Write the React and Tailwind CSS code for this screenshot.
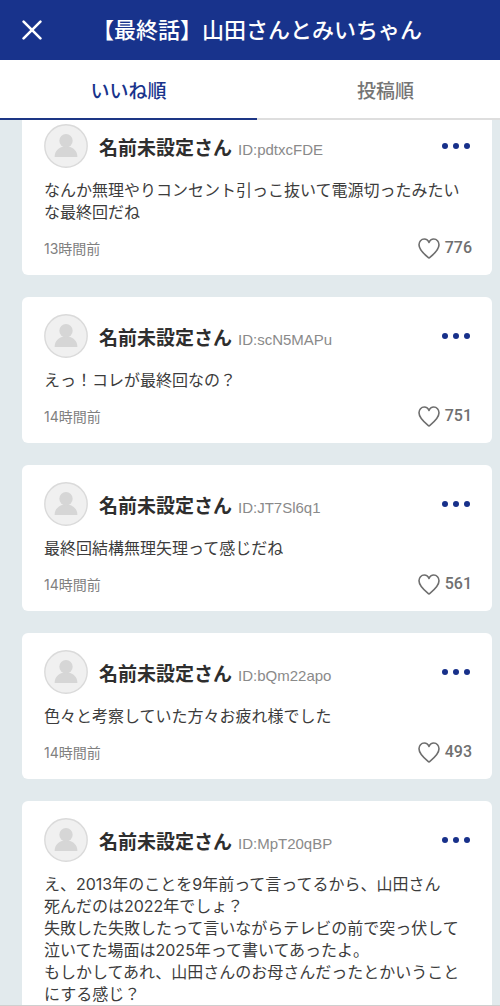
import React, { useState } from 'react';

const comments = [
  { id: 'pdtxcFDE', time: '13時間前', likes: 776, text: 'なんか無理やりコンセント引っこ抜いて電源切ったみたいな最終回だね' },
  { id: 'scN5MAPu', time: '14時間前', likes: 751, text: 'えっ！コレが最終回なの？' },
  { id: 'JT7Sl6q1', time: '14時間前', likes: 561, text: '最終回結構無理矢理って感じだね' },
  { id: 'bQm22apo', time: '14時間前', likes: 493, text: '色々と考察していた方々お疲れ様でした' },
  {
    id: 'MpT20qBP',
    text: 'え、2013年のことを9年前って言ってるから、山田さん\n死んだのは2022年でしょ？\n失敗した失敗したって言いながらテレビの前で突っ伏して泣いてた場面は2025年って書いてあったよ。\nもしかしてあれ、山田さんのお母さんだったとかいうことにする感じ？',
  },
];

const tabs = [
  { key: 'likes', label: 'いいね順' },
  { key: 'recent', label: '投稿順' },
];

function Avatar() {
  return (
    <svg viewBox="0 0 44 44" className="size-11 shrink-0" aria-hidden="true">
      <circle cx="22" cy="22" r="21.2" fill="#f0f0f0" stroke="#dadada" strokeWidth="1.4" />
      <path d="M10.6 33c0-5.8 3.6-8.8 8.2-10.2h6.400c4.6 1.400 8.2 4.400 8.2 10.200z" fill="#d6d6d6" />
      <circle cx="22" cy="16.8" r="6.7" fill="#d6d6d6" />
    </svg>
  );
}

function Heart() {
  return (
    <svg viewBox="0 0 22 21" className="h-[21px] w-[22px]" fill="none" stroke="#6e6e6e" strokeWidth="1.6" strokeLinejoin="round" aria-hidden="true">
      <path d="M11 20C7.5 17.2 1 12.6 1 6.8C1 3.5 3.3 1 6.2 1C8.4 1 10.2 2.4 11 4.4C11.8 2.4 13.6 1 15.8 1C18.7 1 21 3.5 21 6.8C21 12.6 14.5 17.2 11 20Z" />
    </svg>
  );
}

function Comment({ comment }) {
  return (
    <article className="rounded-md bg-white px-[22px] pt-[17px] pb-[15px]">
      <div className="flex items-center">
        <Avatar />
        <div className="ml-[11px] flex flex-1 items-baseline gap-1.5 pt-1.5 whitespace-nowrap">
          <h2 className="text-[19px] leading-7 font-bold text-[#2e2e2e]">名前未設定さん</h2>
          <span className="font-['Liberation_Sans','Noto_Sans_CJK_JP',sans-serif] text-[15px] text-[#8a8a8a]">ID:{comment.id}</span>
        </div>
        <button type="button" aria-label="メニュー" className="flex h-6 items-center gap-[5px]">
          <span className="size-1.5 rounded-full bg-[#17308a]" />
          <span className="size-1.5 rounded-full bg-[#17308a]" />
          <span className="size-1.5 rounded-full bg-[#17308a]" />
        </button>
      </div>
      <p className="mt-[11px] text-[16px] leading-[22px] whitespace-pre-line text-[#3c3c3c]">{comment.text}</p>
      {comment.time && (
        <div className="mt-[13px] flex h-6 items-center justify-between">
          <time className="text-[14px] text-[#808080]">{comment.time}</time>
          <button type="button" aria-label={`いいね ${comment.likes}`} className="-mr-0.5 flex items-center gap-[5px]">
            <Heart />
            <span className="font-['Roboto',sans-serif] text-[16px] leading-6 font-medium text-[#707070]">{comment.likes}</span>
          </button>
        </div>
      )}
    </article>
  );
}

export default function App() {
  const [active, setActive] = useState('likes');

  return (
    <div className="h-screen overflow-hidden bg-[#e2eaed] font-['Inter','Noto_Sans_CJK_JP',sans-serif]" lang="ja">
      {/* the content runs slightly past the right edge of the window */}
      <div className="-mr-3.5 flex h-full flex-col">
        <header className="grid h-[60px] shrink-0 grid-cols-[64px_1fr_64px] items-center bg-[#18338c] text-white">
          <button type="button" aria-label="閉じる" className="flex h-full items-center pl-[22px]">
            <svg viewBox="0 0 20 20" className="size-5" stroke="currentColor" strokeWidth="2.6" strokeLinecap="round" aria-hidden="true">
              <path d="M1.6 1.6L18.4 18.4M18.4 1.6L1.6 18.4" />
            </svg>
          </button>
          <h1 className="text-center text-[22px] leading-8 font-medium whitespace-nowrap">【最終話】山田さんとみいちゃん</h1>
        </header>

        <nav className="grid h-[60px] shrink-0 grid-cols-2 bg-white">
          {tabs.map((tab) => (
            <button
              key={tab.key}
              type="button"
              onClick={() => setActive(tab.key)}
              className={`border-b-2 pt-1.5 text-[19px] font-medium ${
                active === tab.key ? 'border-[#1d3685] text-[#18338c]' : 'border-[#dedede] text-[#757575]'
              }`}
            >
              {tab.label}
            </button>
          ))}
        </nav>

        <main className="min-h-0 flex-1 overflow-y-auto [scrollbar-width:none]">
          <div className="-mt-[13px] flex flex-col gap-[22px] px-[22px]">
            {comments.map((comment) => (
              <Comment key={comment.id} comment={comment} />
            ))}
          </div>
        </main>
        <div className="h-px shrink-0 bg-[#cfcfcf]" />
      </div>
    </div>
  );
}
